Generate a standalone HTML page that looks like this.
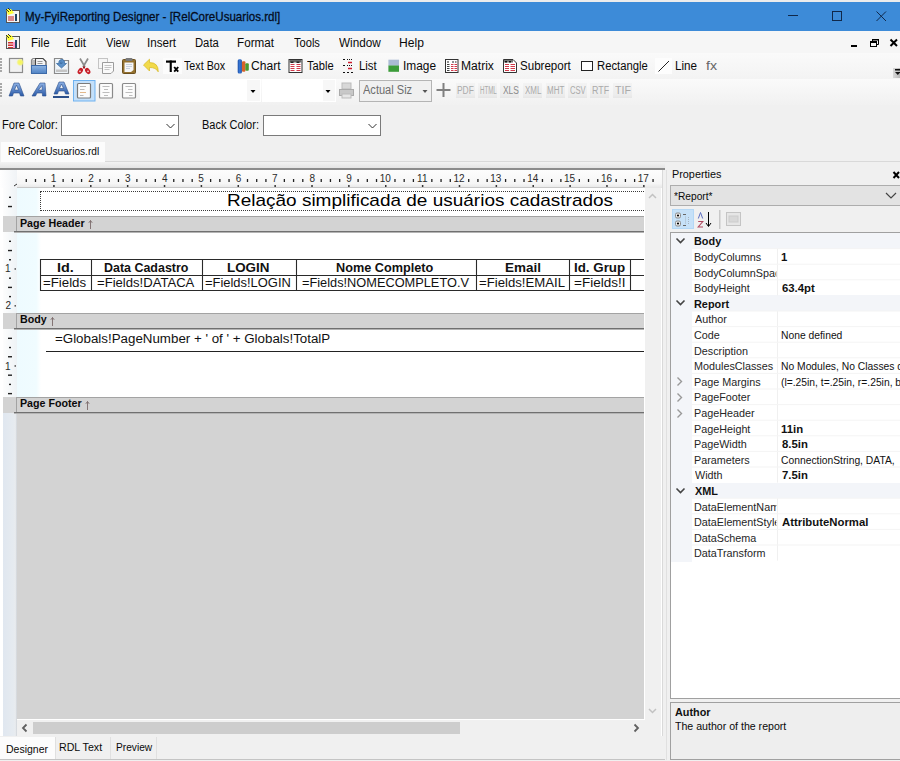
<!DOCTYPE html>
<html><head><meta charset="utf-8">
<style>
*{margin:0;padding:0;box-sizing:border-box}
html,body{width:900px;height:761px;overflow:hidden;background:#f0f0f0;font-family:"Liberation Sans",sans-serif;font-size:12px;color:#000;position:relative}
.a{position:absolute}
.t{position:absolute;white-space:nowrap;line-height:1;transform-origin:0 0}
</style></head><body>
<div class="a" style="left:0px;top:0px;width:900px;height:2px;background:#ececec;"></div>
<div class="a" style="left:0px;top:2px;width:900px;height:29px;background:#3d8bd8;"></div>
<svg class="a" style="left:780px;top:2px" width="120" height="29"><g stroke="#10284a" stroke-width="1" fill="none"><line x1="8" y1="13.5" x2="18" y2="13.5"/><rect x="52.5" y="9.5" width="9" height="9"/><path d="M96.5 9.5 L106 19 M106 9.5 L96.5 19"/></g></svg>
<svg class="a" style="left:5px;top:8px" width="16" height="16" viewBox="0 0 16 16"><rect x="1.5" y="2.5" width="13" height="12" fill="#f4f4f4" stroke="#555"/><rect x="3" y="8" width="6" height="5" fill="#d88"/><rect x="10" y="6" width="2" height="7" fill="#246"/><path d="M1 1 L6 1 L9 5 L3 7Z" fill="#ff3"/><path d="M1 1l3 3M3 0l3 3" stroke="#333"/></svg>
<div class="a" style="left:0px;top:31px;width:900px;height:22px;background:#f6f6f6;"></div>
<svg class="a" style="left:5px;top:34px" width="16" height="16" viewBox="0 0 16 16"><rect x="1.5" y="2.5" width="13" height="12" fill="#f4f4f4" stroke="#555"/><rect x="3" y="8" width="5" height="1.5" fill="#c33"/><rect x="3" y="10.5" width="5" height="1.5" fill="#c33"/><rect x="3" y="13" width="5" height="1" fill="#c33"/><rect x="10" y="6" width="2" height="8" fill="#246"/><rect x="8" y="8" width="2" height="6" fill="#f9c"/><path d="M1 1 L6 1 L9 5 L3 7Z" fill="#ff3"/><path d="M1 1l3 3M3 0l3 3" stroke="#333"/></svg>
<svg class="a" style="left:848px;top:36px" width="52" height="14"><rect x="3" y="9" width="6" height="2" fill="#000"/><g fill="none" stroke="#000"><rect x="22.5" y="5.5" width="6" height="5"/><path d="M24.5 5.5 V3.5 H30.5 V8.5 H28.5"/></g><rect x="22" y="5" width="7" height="2" fill="#000"/><rect x="24" y="3" width="7" height="1.5" fill="#000"/><path d="M42.5 3.5 L49 10 M49 3.5 L42.5 10" stroke="#000" stroke-width="2"/></svg>
<div class="a" style="left:0px;top:53px;width:900px;height:26px;background:linear-gradient(#fafafa,#f3f3f3);"></div>
<div class="a" style="left:0px;top:79px;width:900px;height:26px;background:linear-gradient(#fafafa,#f1f1f1);"></div>
<div class="a" style="left:893px;top:68px;width:7px;height:10px;background:linear-gradient(90deg,#d8d8d8,#b8b8b8);"></div>
<svg class="a" style="left:893px;top:68px" width="7" height="10"><rect x="2" y="1" width="5" height="1.5" fill="#111"/><path d="M2 4 H7.5 L4.8 7Z" fill="#111"/></svg>
<div class="a" style="left:0px;top:58px;width:2px;height:2px;background:#a8a8a8;"></div>
<div class="a" style="left:0px;top:61px;width:2px;height:2px;background:#a8a8a8;"></div>
<div class="a" style="left:0px;top:64px;width:2px;height:2px;background:#a8a8a8;"></div>
<div class="a" style="left:0px;top:67px;width:2px;height:2px;background:#a8a8a8;"></div>
<div class="a" style="left:0px;top:70px;width:2px;height:2px;background:#a8a8a8;"></div>
<div class="a" style="left:0px;top:83px;width:2px;height:2px;background:#a8a8a8;"></div>
<div class="a" style="left:0px;top:86px;width:2px;height:2px;background:#a8a8a8;"></div>
<div class="a" style="left:0px;top:89px;width:2px;height:2px;background:#a8a8a8;"></div>
<div class="a" style="left:0px;top:92px;width:2px;height:2px;background:#a8a8a8;"></div>
<div class="a" style="left:0px;top:95px;width:2px;height:2px;background:#a8a8a8;"></div>
<svg class="a" style="left:0;top:0" width="720" height="80">
<defs>
<linearGradient id="gsv" x1="0" y1="0" x2="0" y2="1"><stop offset="0" stop-color="#8db4e2"/><stop offset="1" stop-color="#4f82c4"/></linearGradient>
<linearGradient id="gbl" x1="0" y1="0" x2="1" y2="0"><stop offset="0" stop-color="#1b4fa8"/><stop offset=".5" stop-color="#3a7ad8"/><stop offset="1" stop-color="#1d4c9a"/></linearGradient>
<radialGradient id="gyl"><stop offset="0" stop-color="#f8f850"/><stop offset=".6" stop-color="#f4f470" stop-opacity=".9"/><stop offset="1" stop-color="#f4f4a0" stop-opacity="0"/></radialGradient>
</defs>
<!-- new -->
<rect x="9.5" y="58.5" width="13" height="14" fill="#f1f1f1" stroke="#8c8c8c" stroke-width="1.2"/>
<circle cx="20.2" cy="62.3" r="4" fill="url(#gyl)"/>
<!-- save -->
<path d="M31.5 73.5 V60 L33 58.5 H35" fill="none" stroke="#8a8a8a" stroke-width="1.2"/>
<rect x="32" y="60" width="3" height="6" fill="#bbb"/>
<path d="M35.5 65.5 V58.5 H43 L46 61.5 V65.5" fill="#f4f4f4" stroke="#444" stroke-width="1.1"/>
<rect x="37.5" y="61" width="5" height="1" fill="#999"/><rect x="37.5" y="63" width="5" height="1" fill="#999"/>
<rect x="31.5" y="65.5" width="15" height="8" fill="url(#gsv)" stroke="#3d6aa8"/>
<!-- import -->
<path d="M54.5 73.5 V58.5 H62 L63 60.5 H68.5 V73.5Z" fill="#eef4f9" stroke="#8a8a8a" stroke-width="1.2"/>
<rect x="56" y="69.5" width="11" height="2.5" fill="#c4c4c4"/>
<path d="M58.5 62.5 Q59.5 59 62.5 59.5 Q65 60 64.5 63.5 H66.5 L61.5 68 L56.5 63.5 H59.5 Q59.5 62 61.5 62 Q62.5 62.5 62 63.5 H60" fill="#5a90c8" stroke="#3d6ea4" stroke-width=".8"/>
<!-- cut -->
<path d="M80 58.5 L85 67 M88 58.5 L83 67" stroke="#8c8c8c" stroke-width="1.7" fill="none"/>
<ellipse cx="80.3" cy="71" rx="3.3" ry="2.3" transform="rotate(-55 80.3 71)" fill="#c81e28"/>
<ellipse cx="87.7" cy="71" rx="3.3" ry="2.3" transform="rotate(55 87.7 71)" fill="#c81e28"/>
<circle cx="80" cy="71.3" r="0.9" fill="#f4d0d0"/><circle cx="88" cy="71.3" r="0.9" fill="#f4d0d0"/>
<rect x="83" y="66.5" width="2" height="2" fill="#a01820"/>
<!-- copy -->
<rect x="98.5" y="58.5" width="9" height="10" fill="#f6f6f6" stroke="#c4c4c4"/>
<path d="M102.5 62.5 H113.5 V71 L111 73.5 H102.5Z" fill="#fafafa" stroke="#9c9c9c"/>
<path d="M104.5 65.5h7M104.5 67.5h7M104.5 69.5h5" stroke="#c4c4c4"/>
<!-- paste -->
<rect x="122.5" y="59.5" width="13" height="14" rx="1" fill="#94712e" stroke="#6a4f1e"/>
<path d="M124.5 62.5 H133.5 V70 L131 72 H124.5Z" fill="#f6f6f6"/>
<path d="M126 64.5h6M126 66.5h6M126 68.5h4" stroke="#c8d0dc"/>
<rect x="125.5" y="58" width="7" height="3" rx="1" fill="#7a7a7a"/>
<!-- undo -->
<path d="M143.5 65 L149.5 59.2 V62.6 Q158.5 62.5 158.2 71.8 Q156 67.4 149.5 67.5 V71Z" fill="#f2da4a" stroke="#d8bc2c" stroke-width=".8"/>
<!-- textbox -->
<rect x="163" y="58" width="19" height="16" fill="#fcfcfc"/>
<rect x="166" y="60.5" width="10" height="2.2" fill="#000"/>
<rect x="169.7" y="60.5" width="2.1" height="11.5" fill="#000"/>
<path d="M174.2 67 L178.2 71.7 M178.2 67 L174.2 71.7" stroke="#000" stroke-width="1.9"/>
<!-- chart -->
<rect x="237.7" y="59.2" width="4.2" height="14.4" rx="1.5" fill="url(#gbl)"/>
<rect x="242" y="61.3" width="3.4" height="10.4" rx="1" fill="#d8632a"/>
<rect x="245.3" y="63.2" width="3.5" height="7.5" rx="1" fill="#4a9a2e"/>
<!-- table -->
<rect x="289" y="59.5" width="13" height="13" fill="#fff" stroke="#333"/>
<rect x="289.5" y="60" width="12" height="2.5" fill="#6a6a6a"/>
<rect x="290.5" y="61.5" width="3" height="1.5" fill="#222"/><rect x="296.5" y="61.5" width="3" height="1.5" fill="#222"/>
<path d="M290.5 64.5h4M296.5 64.5h4M290.5 66.5h4M296.5 66.5h4M290.5 68.5h4M296.5 68.5h4M290.5 70.5h4M296.5 70.5h4" stroke="#d23a4a" stroke-width="1.1"/>
<!-- list -->
<path d="M343 59.5h2M343 65.5h2M343 72.5h2M347 72.5h2M351 72.5h2" stroke="#111" stroke-width="1.2"/>
<path d="M347 59.5h6M347 65.5h6" stroke="#111" stroke-width="1" stroke-dasharray="1 1"/>
<path d="M348 62.5h4M348 68.5h4" stroke="#d01c2c" stroke-width="1.6"/>
<!-- image -->
<rect x="388.4" y="59.7" width="10.6" height="6" fill="#aabbd4"/>
<rect x="388.4" y="65.5" width="10.6" height="6.3" fill="#3c9c3a"/>
<!-- matrix -->
<rect x="445.5" y="59.5" width="12.5" height="13" fill="#fff" stroke="#333"/>
<path d="M447 62h2M452 62h2M455 62h1.5" stroke="#222" stroke-width="1.2"/>
<path d="M447 64.5h2.5M447 66.5h2.5M447 68.5h2.5M447 70.5h2.5" stroke="#444" stroke-width="1.1"/>
<path d="M451 64.5h2.5M454.5 64.5h2.5M451 66.5h2.5M454.5 66.5h2.5M451 68.5h2.5M454.5 68.5h2.5M451 70.5h2.5M454.5 70.5h2.5" stroke="#d23a4a" stroke-width="1.1"/>
<!-- subreport -->
<path d="M503.5 59.5 H513 L516.5 63 V72.5 H503.5Z" fill="#fff" stroke="#333"/>
<rect x="504" y="60" width="9" height="2.5" fill="#777"/>
<rect x="505" y="61" width="2" height="1.5" fill="#111"/><rect x="509" y="61" width="2" height="1.5" fill="#111"/>
<path d="M505 64.5h4M510.5 64.5h4.5M505 66.5h4M510.5 66.5h4.5M505 68.5h4M510.5 68.5h4.5M505 70.5h4M510.5 70.5h4.5" stroke="#d23a4a" stroke-width="1.1"/>
<!-- rectangle -->
<rect x="581.5" y="61.5" width="11" height="9" fill="#fff" stroke="#222"/>
<!-- line -->
<rect x="655" y="58" width="17" height="16" fill="#fdfdfd"/>
<path d="M658.5 71.5 L669 61" stroke="#222" stroke-width="1"/>
</svg>
<svg class="a" style="left:0;top:79px" width="640" height="26">
<defs><linearGradient id="ga" x1="0" y1="0" x2="0" y2="1"><stop offset="0" stop-color="#8fb3e6"/><stop offset="1" stop-color="#2a5aa8"/></linearGradient></defs>
<path d="M9 17 L14 4 H19 L24 17 H20.5 L19.5 14 H13.5 L12.5 17Z M14.5 11 H18.5 L16.5 6Z" fill="url(#ga)" fill-rule="evenodd" stroke="#2b4f8a" stroke-width=".6"/>
<path d="M32 17 L40 4 H45 L46 17 H42.5 L42.3 14 H37 L35.5 17Z M38.5 11 H42.2 L42 6.5Z" fill="url(#ga)" fill-rule="evenodd" stroke="#2b4f8a" stroke-width=".6"/>
<path d="M54 15 L59 3 H64 L69 15 H65.5 L64.5 12 H58.5 L57.5 15Z M59.5 9.5 H63.5 L61.5 5Z" fill="url(#ga)" fill-rule="evenodd" stroke="#2b4f8a" stroke-width=".6"/>
<rect x="53" y="17" width="16" height="2" fill="#2b4f8a"/>
<rect x="73.5" y="1.5" width="21.5" height="20.5" fill="#c4e0fa" stroke="#6fb2f0"/>
<rect x="77.5" y="4.5" width="13" height="14.5" rx="1" fill="#fcfcfc" stroke="#7a7a7a" stroke-width="1.2"/>
<path d="M80 7.5h6M80 10.5h4.5M80 13.5h6M80 16.5h3.5" stroke="#b8b8b8"/><path d="M80 13.5h6" stroke="#e3b88a"/>
<rect x="99.5" y="4.5" width="13" height="14.5" rx="1" fill="#fcfcfc" stroke="#8a8a8a" stroke-width="1.2"/>
<path d="M102.5 7.5h7M104 10.5h4M102.5 13.5h7M104 16.5h4" stroke="#bdbdbd"/>
<rect x="122.5" y="4.5" width="13" height="14.5" rx="1" fill="#fcfcfc" stroke="#8a8a8a" stroke-width="1.2"/>
<path d="M125.5 7.5h7M128 10.5h4.5M125.5 13.5h7M129 16.5h3.5" stroke="#bdbdbd"/>
<rect x="140" y="0" width="121" height="23" fill="#fff"/>
<rect x="247" y="1" width="13" height="21" fill="#f7f7f7"/>
<path d="M250.5 11 H255.5 L253 14Z" fill="#000"/>
<rect x="262" y="0" width="74" height="23" fill="#fff"/>
<rect x="323" y="1" width="12" height="21" fill="#f7f7f7"/>
<path d="M325.5 11 H330.5 L328 14Z" fill="#000"/>
<g transform="translate(339,4)"><rect x="3" y="0" width="9" height="6" fill="#d8d8d8" stroke="#bbb"/><rect x="0.5" y="6.5" width="14" height="6" fill="#c8c8c8" stroke="#aaa"/><rect x="3" y="11" width="9" height="4" fill="#e6e6e6" stroke="#bbb"/></g>
<rect x="359.5" y="1.5" width="72" height="21" fill="#f0f0f0" stroke="#b4b4b4"/>
<path d="M422.5 11 H427.5 L425 14Z" fill="#555"/>
<path d="M443.5 4 V18 M436.5 11 H450.5" stroke="#808080" stroke-width="2"/>
</svg>
<div class="a" style="left:456px;top:83px;width:19px;height:15px;background:linear-gradient(#f3f3f3,#ececec 80%,#e6e6e6);"></div>
<div class="a" style="left:478px;top:83px;width:19px;height:15px;background:linear-gradient(#f3f3f3,#ececec 80%,#e6e6e6);"></div>
<div class="a" style="left:500px;top:83px;width:19px;height:15px;background:linear-gradient(#f3f3f3,#ececec 80%,#e6e6e6);"></div>
<div class="a" style="left:523px;top:83px;width:19px;height:15px;background:linear-gradient(#f3f3f3,#ececec 80%,#e6e6e6);"></div>
<div class="a" style="left:546px;top:83px;width:19px;height:15px;background:linear-gradient(#f3f3f3,#ececec 80%,#e6e6e6);"></div>
<div class="a" style="left:568px;top:83px;width:19px;height:15px;background:linear-gradient(#f3f3f3,#ececec 80%,#e6e6e6);"></div>
<div class="a" style="left:590px;top:83px;width:19px;height:15px;background:linear-gradient(#f3f3f3,#ececec 80%,#e6e6e6);"></div>
<div class="a" style="left:613px;top:83px;width:19px;height:15px;background:linear-gradient(#f3f3f3,#ececec 80%,#e6e6e6);"></div>
<div class="a" style="left:61px;top:115px;width:118px;height:21px;background:#fff;border:1px solid #7a7a7a"></div>
<div class="a" style="left:263px;top:115px;width:118px;height:21px;background:#fff;border:1px solid #7a7a7a"></div>
<svg class="a" style="left:0;top:115px" width="400" height="21"><path d="M166.5 9 L170.5 13 L174.5 9 M368.5 9 L372.5 13 L376.5 9" stroke="#333" fill="none"/></svg>
<div class="a" style="left:1px;top:142px;width:104px;height:20px;background:#fcfcfc;"></div>
<div class="a" style="left:105px;top:161px;width:795px;height:1px;background:#d9d9d9;"></div>
<div class="a" style="left:0px;top:162px;width:665px;height:6px;background:linear-gradient(#f3f3f3,#e4e4e4);"></div>
<div class="a" style="left:0px;top:168px;width:665px;height:2px;background:#8c8c8c;"></div>
<div class="a" style="left:0px;top:170px;width:662px;height:567px;background:#fff;"></div>
<div class="a" style="left:17px;top:170px;width:645px;height:18px;background:linear-gradient(#fdfdfd,#f6f6f6 75%,#e6e6e6);"></div>
<div class="a" style="left:17px;top:187px;width:628px;height:1px;background:#c8c8c8;"></div>
<div class="a" style="left:0px;top:170px;width:17px;height:18px;background:linear-gradient(90deg,#fff,#f0f3f6);"></div>
<svg class="a" style="left:0;top:170px" width="662" height="18"><rect x="25.62" y="9" width="1.3" height="3" fill="#222"/><rect x="34.84" y="9" width="1.3" height="3" fill="#222"/><rect x="44.05" y="9" width="1.3" height="3" fill="#222"/><rect x="62.49" y="9" width="1.3" height="3" fill="#222"/><rect x="71.70" y="9" width="1.3" height="3" fill="#222"/><rect x="80.92" y="9" width="1.3" height="3" fill="#222"/><rect x="53.17" y="15" width="1.5" height="2" fill="#333"/><rect x="99.36" y="9" width="1.3" height="3" fill="#222"/><rect x="108.58" y="9" width="1.3" height="3" fill="#222"/><rect x="117.79" y="9" width="1.3" height="3" fill="#222"/><rect x="90.04" y="15" width="1.5" height="2" fill="#333"/><rect x="136.23" y="9" width="1.3" height="3" fill="#222"/><rect x="145.44" y="9" width="1.3" height="3" fill="#222"/><rect x="154.66" y="9" width="1.3" height="3" fill="#222"/><rect x="126.91" y="15" width="1.5" height="2" fill="#333"/><rect x="173.10" y="9" width="1.3" height="3" fill="#222"/><rect x="182.31" y="9" width="1.3" height="3" fill="#222"/><rect x="191.53" y="9" width="1.3" height="3" fill="#222"/><rect x="163.78" y="15" width="1.5" height="2" fill="#333"/><rect x="209.97" y="9" width="1.3" height="3" fill="#222"/><rect x="219.19" y="9" width="1.3" height="3" fill="#222"/><rect x="228.40" y="9" width="1.3" height="3" fill="#222"/><rect x="200.65" y="15" width="1.5" height="2" fill="#333"/><rect x="246.84" y="9" width="1.3" height="3" fill="#222"/><rect x="256.05" y="9" width="1.3" height="3" fill="#222"/><rect x="265.27" y="9" width="1.3" height="3" fill="#222"/><rect x="237.52" y="15" width="1.5" height="2" fill="#333"/><rect x="283.71" y="9" width="1.3" height="3" fill="#222"/><rect x="292.92" y="9" width="1.3" height="3" fill="#222"/><rect x="302.14" y="9" width="1.3" height="3" fill="#222"/><rect x="274.39" y="15" width="1.5" height="2" fill="#333"/><rect x="320.58" y="9" width="1.3" height="3" fill="#222"/><rect x="329.79" y="9" width="1.3" height="3" fill="#222"/><rect x="339.01" y="9" width="1.3" height="3" fill="#222"/><rect x="311.26" y="15" width="1.5" height="2" fill="#333"/><rect x="357.45" y="9" width="1.3" height="3" fill="#222"/><rect x="366.66" y="9" width="1.3" height="3" fill="#222"/><rect x="375.88" y="9" width="1.3" height="3" fill="#222"/><rect x="348.13" y="15" width="1.5" height="2" fill="#333"/><rect x="394.32" y="9" width="1.3" height="3" fill="#222"/><rect x="403.53" y="9" width="1.3" height="3" fill="#222"/><rect x="412.75" y="9" width="1.3" height="3" fill="#222"/><rect x="385.00" y="15" width="1.5" height="2" fill="#333"/><rect x="431.19" y="9" width="1.3" height="3" fill="#222"/><rect x="440.40" y="9" width="1.3" height="3" fill="#222"/><rect x="449.62" y="9" width="1.3" height="3" fill="#222"/><rect x="421.87" y="15" width="1.5" height="2" fill="#333"/><rect x="468.06" y="9" width="1.3" height="3" fill="#222"/><rect x="477.27" y="9" width="1.3" height="3" fill="#222"/><rect x="486.49" y="9" width="1.3" height="3" fill="#222"/><rect x="458.74" y="15" width="1.5" height="2" fill="#333"/><rect x="504.93" y="9" width="1.3" height="3" fill="#222"/><rect x="514.14" y="9" width="1.3" height="3" fill="#222"/><rect x="523.36" y="9" width="1.3" height="3" fill="#222"/><rect x="495.61" y="15" width="1.5" height="2" fill="#333"/><rect x="541.80" y="9" width="1.3" height="3" fill="#222"/><rect x="551.01" y="9" width="1.3" height="3" fill="#222"/><rect x="560.23" y="9" width="1.3" height="3" fill="#222"/><rect x="532.48" y="15" width="1.5" height="2" fill="#333"/><rect x="578.67" y="9" width="1.3" height="3" fill="#222"/><rect x="587.88" y="9" width="1.3" height="3" fill="#222"/><rect x="597.10" y="9" width="1.3" height="3" fill="#222"/><rect x="569.35" y="15" width="1.5" height="2" fill="#333"/><rect x="615.54" y="9" width="1.3" height="3" fill="#222"/><rect x="624.75" y="9" width="1.3" height="3" fill="#222"/><rect x="633.97" y="9" width="1.3" height="3" fill="#222"/><rect x="606.22" y="15" width="1.5" height="2" fill="#333"/><rect x="652.41" y="9" width="1.3" height="3" fill="#222"/><rect x="643.09" y="15" width="1.5" height="2" fill="#333"/><path d="M14 16 L17 14" stroke="#333"/></svg>
<div class="a" style="left:3px;top:188px;width:14px;height:549px;background:linear-gradient(90deg,#e0e7f0,#e6ebf0 75%,#e9ecef 88%,#cfd3d8);"></div>
<div class="a" style="left:0px;top:188px;width:3px;height:549px;background:#fff;"></div>
<div class="a" style="left:17px;top:188px;width:628px;height:532px;background:#d3d3d3;"></div>
<div class="a" style="left:17px;top:188px;width:628px;height:28px;background:#fff;"></div>
<div class="a" style="left:17px;top:232px;width:628px;height:81px;background:#fff;"></div>
<div class="a" style="left:17px;top:329px;width:628px;height:68px;background:#fff;"></div>
<div class="a" style="left:17px;top:188px;width:24px;height:28px;background:linear-gradient(90deg,#eefbff,#f0fcff 80%,#fff);"></div>
<div class="a" style="left:17px;top:232px;width:24px;height:81px;background:linear-gradient(90deg,#eefbff,#f0fcff 80%,#fff);"></div>
<div class="a" style="left:17px;top:329px;width:24px;height:68px;background:linear-gradient(90deg,#eefbff,#f0fcff 80%,#fff);"></div>
<div class="a" style="left:3px;top:188px;width:14px;height:28px;background:linear-gradient(90deg,#fdfdfd,#eef3f6);"></div>
<div class="a" style="left:3px;top:232px;width:14px;height:81px;background:linear-gradient(90deg,#fdfdfd,#eef3f6);"></div>
<div class="a" style="left:3px;top:329px;width:14px;height:68px;background:linear-gradient(90deg,#fdfdfd,#eef3f6);"></div>
<div class="a" style="left:3px;top:216px;width:642px;height:16px;background:#d3d3d3;"></div>
<div class="a" style="left:16px;top:216px;width:629px;height:1px;background:#a3a3a3;"></div>
<div class="a" style="left:16px;top:216px;width:1px;height:15px;background:#a3a3a3;"></div>
<div class="a" style="left:14px;top:231px;width:630px;height:1px;background:#707070;"></div>
<div class="a" style="left:14px;top:232px;width:630px;height:1px;background:#b4b4b4;"></div>
<div class="a" style="left:3px;top:313px;width:642px;height:16px;background:#d3d3d3;"></div>
<div class="a" style="left:16px;top:313px;width:629px;height:1px;background:#a3a3a3;"></div>
<div class="a" style="left:16px;top:313px;width:1px;height:15px;background:#a3a3a3;"></div>
<div class="a" style="left:14px;top:328px;width:630px;height:1px;background:#707070;"></div>
<div class="a" style="left:14px;top:329px;width:630px;height:1px;background:#b4b4b4;"></div>
<div class="a" style="left:3px;top:397px;width:642px;height:16px;background:#d3d3d3;"></div>
<div class="a" style="left:16px;top:397px;width:629px;height:1px;background:#a3a3a3;"></div>
<div class="a" style="left:16px;top:397px;width:1px;height:15px;background:#a3a3a3;"></div>
<div class="a" style="left:14px;top:412px;width:630px;height:1px;background:#707070;"></div>
<div class="a" style="left:14px;top:413px;width:630px;height:1px;background:#b4b4b4;"></div>
<svg class="a" style="left:0;top:0" width="17" height="761"><rect x="9" y="196.62" width="2" height="1.4" fill="#222"/><rect x="8" y="205.84" width="4" height="1.4" fill="#222"/><rect x="9" y="240.62" width="2" height="1.4" fill="#222"/><rect x="8" y="249.84" width="4" height="1.4" fill="#222"/><rect x="9" y="259.05" width="2" height="1.4" fill="#222"/><rect x="14.5" y="268.27" width="1.5" height="1.4" fill="#444"/><rect x="9" y="277.49" width="2" height="1.4" fill="#222"/><rect x="8" y="286.70" width="4" height="1.4" fill="#222"/><rect x="9" y="295.92" width="2" height="1.4" fill="#222"/><rect x="14.5" y="305.14" width="1.5" height="1.4" fill="#444"/><rect x="8" y="337.62" width="4" height="1.4" fill="#222"/><rect x="9" y="346.83" width="2" height="1.4" fill="#222"/><rect x="8" y="356.05" width="4" height="1.4" fill="#222"/><rect x="14.5" y="365.27" width="1.5" height="1.4" fill="#444"/><rect x="8" y="374.49" width="4" height="1.4" fill="#222"/><rect x="9" y="383.70" width="2" height="1.4" fill="#222"/><rect x="8" y="392.92" width="4" height="1.4" fill="#222"/></svg>
<div class="a" style="left:40px;top:191px;width:604px;height:20px;border-top:1px dotted #3a3a3a;border-bottom:1px dotted #3a3a3a;border-left:1px dotted #3a3a3a"></div>
<svg class="a" style="left:0;top:0" width="645" height="761"><g stroke="#2a2a2a" stroke-width="1.1" fill="none"><path d="M40 259.5 H644 M40 275.5 H644 M40 290.5 H644 M40.5 259 V291 M91.5 259 V291 M202.5 259 V291 M296.5 259 V291 M476.5 259 V291 M569.5 259 V291 M630.5 259 V291"/></g><path d="M46 351.5 H644" stroke="#222" stroke-width="1.1"/></svg>
<svg class="a" style="left:87.00px;top:219px" width="6" height="11"><path d="M3.5 1.5 V10 M1.8 3.8 L3.5 1.5 L5.2 3.8" stroke="#7a6a6a" fill="none" stroke-width=".9"/></svg>
<svg class="a" style="left:49.18px;top:316px" width="6" height="11"><path d="M3.5 1.5 V10 M1.8 3.8 L3.5 1.5 L5.2 3.8" stroke="#7a6a6a" fill="none" stroke-width=".9"/></svg>
<svg class="a" style="left:84.09px;top:400px" width="6" height="11"><path d="M3.5 1.5 V10 M1.8 3.8 L3.5 1.5 L5.2 3.8" stroke="#7a6a6a" fill="none" stroke-width=".9"/></svg>
<div class="a" style="left:645px;top:188px;width:16px;height:532px;background:#f0f0f0;"></div>
<div class="a" style="left:17px;top:720px;width:628px;height:16px;background:#f0f0f0;"></div>
<div class="a" style="left:33px;top:722px;width:427px;height:12px;background:#cdcdcd;"></div>
<svg class="a" style="left:0;top:0" width="662" height="740"><g stroke="#c2c2c2" stroke-width="1.5" fill="none"><path d="M649 198 L652.5 194.5 L656 198"/><path d="M649 709 L652.5 712.5 L656 709"/></g><g stroke="#606060" stroke-width="1.8" fill="none"><path d="M26.5 724.5 L23 728 L26.5 731.5"/><path d="M634.5 724.5 L638 728 L634.5 731.5"/></g></svg>
<div class="a" style="left:645px;top:720px;width:16px;height:16px;background:#f0f0f0;"></div>
<div class="a" style="left:17px;top:719px;width:628px;height:1px;background:#fff;"></div>
<div class="a" style="left:644px;top:188px;width:1px;height:532px;background:#fff;"></div>
<div class="a" style="left:662px;top:170px;width:1px;height:567px;background:#d9d9d9;"></div>
<div class="a" style="left:0px;top:736px;width:663px;height:1px;background:#d9d9d9;"></div>
<div class="a" style="left:0px;top:736px;width:665px;height:25px;background:#f0f0f0;"></div>
<div class="a" style="left:0px;top:737px;width:55px;height:22px;background:#fcfcfc;"></div>
<div class="a" style="left:55px;top:737px;width:1px;height:22px;background:#e0e0e0;"></div>
<div class="a" style="left:110px;top:737px;width:1px;height:22px;background:#e0e0e0;"></div>
<div class="a" style="left:156px;top:737px;width:1px;height:22px;background:#e0e0e0;"></div>
<div class="a" style="left:0px;top:759px;width:666px;height:1px;background:#c4c4c4;"></div>
<div class="a" style="left:665px;top:162px;width:235px;height:599px;background:#f0f0f0;"></div>
<div class="a" style="left:666px;top:170px;width:1px;height:590px;background:#e0e0e0;"></div>
<svg class="a" style="left:890px;top:170px" width="10" height="10"><path d="M3.5 2 L9 8 M9 2 L3.5 8" stroke="#000" stroke-width="2"/></svg>
<div class="a" style="left:670px;top:185px;width:230px;height:21px;background:#e3e3e3;border:1px solid #adadad;border-right:none"></div>
<svg class="a" style="left:880px;top:185px" width="20" height="21"><path d="M6 8 L11 13 L16 8" stroke="#444" fill="none" stroke-width="1.2"/></svg>
<svg class="a" style="left:670px;top:207px" width="80" height="25">
<rect x="2.5" y="2.5" width="21" height="19" fill="#c6e1f8" stroke="#b4d8f6"/>
<rect x="5.5" y="6" width="5" height="5" rx="1.5" fill="#eee" stroke="#8a8a8a"/><circle cx="8" cy="8.5" r="1.1" fill="#000"/>
<rect x="5.5" y="14" width="5" height="5" rx="1.5" fill="#eee" stroke="#8a8a8a"/><circle cx="8" cy="16.5" r="1.1" fill="#000"/>
<path d="M13 7.5h3M13 18.5h3" stroke="#666"/><path d="M15.5 9.5v7M18.5 10v8" stroke="#a8b4c0" stroke-dasharray="1 1"/>
<path d="M28.3 11.5 L30.5 5.5 L32.7 11.5" stroke="#5a6cc0" stroke-width="1" fill="none"/>
<path d="M28.2 14.5 H32.8 L28.2 20 H33" stroke="#b04860" stroke-width="1.1" fill="none"/>
<path d="M38.5 5 V19 M36 16 L38.5 19.5 L41 16" stroke="#000" fill="none"/>
<rect x="49" y="3" width="1.5" height="19" fill="#c8c8c8"/>
<rect x="56.5" y="5.5" width="14" height="13" fill="#e6e6e6" stroke="#c4c4c4"/><rect x="59" y="9" width="9" height="6" fill="#d8d8d8" stroke="#ccc"/>
</svg>
<div class="a" style="left:670px;top:232px;width:230px;height:467px;background:#fff;border:1px solid #a0a0a0;border-right:none"></div>
<div class="a" style="left:671px;top:233px;width:21px;height:328.5px;background:#f3f5f9;"></div>
<div class="a" style="left:671px;top:233.0px;width:229px;height:15.6px;background:#f3f5f9;"></div>
<svg class="a" style="left:675px;top:236.00px" width="12" height="10"><path d="M1.5 2.5 L5.5 6.5 L9.5 2.5" stroke="#444" stroke-width="1.6" fill="none"/></svg>
<div class="a" style="left:671px;top:295.4px;width:229px;height:15.6px;background:#f3f5f9;"></div>
<svg class="a" style="left:675px;top:298.40px" width="12" height="10"><path d="M1.5 2.5 L5.5 6.5 L9.5 2.5" stroke="#444" stroke-width="1.6" fill="none"/></svg>
<div class="a" style="left:671px;top:482.6px;width:229px;height:15.6px;background:#f3f5f9;"></div>
<svg class="a" style="left:675px;top:485.60px" width="12" height="10"><path d="M1.5 2.5 L5.5 6.5 L9.5 2.5" stroke="#444" stroke-width="1.6" fill="none"/></svg>
<svg class="a" style="left:674px;top:376.40px" width="10" height="11"><path d="M3.5 1.5 L7.5 5.5 L3.5 9.5" stroke="#999" stroke-width="1.4" fill="none"/></svg>
<svg class="a" style="left:674px;top:392.00px" width="10" height="11"><path d="M3.5 1.5 L7.5 5.5 L3.5 9.5" stroke="#999" stroke-width="1.4" fill="none"/></svg>
<svg class="a" style="left:674px;top:407.60px" width="10" height="11"><path d="M3.5 1.5 L7.5 5.5 L3.5 9.5" stroke="#999" stroke-width="1.4" fill="none"/></svg>
<svg class="a" style="left:0;top:0" width="900" height="761"><rect x="777" y="248.60" width="1" height="15.60" fill="#f0f0f0"/><rect x="692" y="248.10" width="208" height="1" fill="#f4f4f4"/><rect x="777" y="264.20" width="1" height="15.60" fill="#f0f0f0"/><rect x="692" y="263.70" width="208" height="1" fill="#f4f4f4"/><rect x="777" y="279.80" width="1" height="15.60" fill="#f0f0f0"/><rect x="692" y="279.30" width="208" height="1" fill="#f4f4f4"/><rect x="777" y="311.00" width="1" height="15.60" fill="#f0f0f0"/><rect x="692" y="310.50" width="208" height="1" fill="#f4f4f4"/><rect x="777" y="326.60" width="1" height="15.60" fill="#f0f0f0"/><rect x="692" y="326.10" width="208" height="1" fill="#f4f4f4"/><rect x="777" y="342.20" width="1" height="15.60" fill="#f0f0f0"/><rect x="692" y="341.70" width="208" height="1" fill="#f4f4f4"/><rect x="777" y="357.80" width="1" height="15.60" fill="#f0f0f0"/><rect x="692" y="357.30" width="208" height="1" fill="#f4f4f4"/><rect x="777" y="373.40" width="1" height="15.60" fill="#f0f0f0"/><rect x="692" y="372.90" width="208" height="1" fill="#f4f4f4"/><rect x="777" y="389.00" width="1" height="15.60" fill="#f0f0f0"/><rect x="692" y="388.50" width="208" height="1" fill="#f4f4f4"/><rect x="777" y="404.60" width="1" height="15.60" fill="#f0f0f0"/><rect x="692" y="404.10" width="208" height="1" fill="#f4f4f4"/><rect x="777" y="420.20" width="1" height="15.60" fill="#f0f0f0"/><rect x="692" y="419.70" width="208" height="1" fill="#f4f4f4"/><rect x="777" y="435.80" width="1" height="15.60" fill="#f0f0f0"/><rect x="692" y="435.30" width="208" height="1" fill="#f4f4f4"/><rect x="777" y="451.40" width="1" height="15.60" fill="#f0f0f0"/><rect x="692" y="450.90" width="208" height="1" fill="#f4f4f4"/><rect x="777" y="467.00" width="1" height="15.60" fill="#f0f0f0"/><rect x="692" y="466.50" width="208" height="1" fill="#f4f4f4"/><rect x="777" y="498.20" width="1" height="15.60" fill="#f0f0f0"/><rect x="692" y="497.70" width="208" height="1" fill="#f4f4f4"/><rect x="777" y="513.80" width="1" height="15.60" fill="#f0f0f0"/><rect x="692" y="513.30" width="208" height="1" fill="#f4f4f4"/><rect x="777" y="529.40" width="1" height="15.60" fill="#f0f0f0"/><rect x="692" y="528.90" width="208" height="1" fill="#f4f4f4"/><rect x="777" y="545.00" width="1" height="15.60" fill="#f0f0f0"/><rect x="692" y="544.50" width="208" height="1" fill="#f4f4f4"/></svg>
<div class="a" style="left:670px;top:702px;width:230px;height:58px;background:#eeeeee;border:1px solid #a0a0a0;border-right:none"></div>
<div class="t" style="left:24.51px;top:10px;font-size:13px;font-weight:normal;color:#040c1c;transform:scaleX(0.8898);-webkit-text-stroke:0.3px #040c1c;">My-FyiReporting Designer - [RelCoreUsuarios.rdl]</div>
<div class="t" style="left:30.54px;top:37px;font-size:12px;font-weight:normal;color:#0a0a0a;transform:scaleX(0.9611);">File</div>
<div class="t" style="left:66.23px;top:37px;font-size:12px;font-weight:normal;color:#0a0a0a;transform:scaleX(0.9650);">Edit</div>
<div class="t" style="left:105.60px;top:37px;font-size:12px;font-weight:normal;color:#0a0a0a;transform:scaleX(0.9192);">View</div>
<div class="t" style="left:147.43px;top:37px;font-size:12px;font-weight:normal;color:#0a0a0a;transform:scaleX(0.9690);">Insert</div>
<div class="t" style="left:194.56px;top:37px;font-size:12px;font-weight:normal;color:#0a0a0a;transform:scaleX(0.9375);">Data</div>
<div class="t" style="left:236.73px;top:37px;font-size:12px;font-weight:normal;color:#0a0a0a;transform:scaleX(0.9730);">Format</div>
<div class="t" style="left:293.70px;top:37px;font-size:12px;font-weight:normal;color:#0a0a0a;transform:scaleX(0.9250);">Tools</div>
<div class="t" style="left:338.80px;top:37px;font-size:12px;font-weight:normal;color:#0a0a0a;transform:scaleX(0.9791);">Window</div>
<div class="t" style="left:399.39px;top:37px;font-size:12px;font-weight:normal;color:#0a0a0a;transform:scaleX(1.0087);">Help</div>
<div class="t" style="left:184.40px;top:60px;font-size:12px;font-weight:normal;color:#0a0a0a;transform:scaleX(0.8935);">Text Box</div>
<div class="t" style="left:250.69px;top:60px;font-size:12px;font-weight:normal;color:#0a0a0a;transform:scaleX(1.0071);">Chart</div>
<div class="t" style="left:307.30px;top:60px;font-size:12px;font-weight:normal;color:#0a0a0a;transform:scaleX(0.9286);">Table</div>
<div class="t" style="left:359.25px;top:60px;font-size:12px;font-weight:normal;color:#0a0a0a;transform:scaleX(0.9500);">List</div>
<div class="t" style="left:403.31px;top:60px;font-size:12px;font-weight:normal;color:#0a0a0a;transform:scaleX(0.9906);">Image</div>
<div class="t" style="left:461.39px;top:60px;font-size:12px;font-weight:normal;color:#0a0a0a;transform:scaleX(1.0063);">Matrix</div>
<div class="t" style="left:519.94px;top:60px;font-size:12px;font-weight:normal;color:#0a0a0a;transform:scaleX(0.9635);">Subreport</div>
<div class="t" style="left:597.26px;top:60px;font-size:12px;font-weight:normal;color:#0a0a0a;transform:scaleX(0.9396);">Rectangle</div>
<div class="t" style="left:674.63px;top:60px;font-size:12px;font-weight:normal;color:#0a0a0a;transform:scaleX(0.9714);">Line</div>
<div class="t" style="left:705.80px;top:60px;font-size:12px;font-weight:normal;color:#666;transform:scaleX(1.1778);">fx</div>
<div class="t" style="left:362.50px;top:84px;font-size:12px;font-weight:normal;color:#6d6d6d;transform:scaleX(0.9208);">Actual Siz</div>
<div class="t" style="left:456.96px;top:86px;font-size:10px;font-weight:normal;color:#aaaaaa;transform:scaleX(0.8421);">PDF</div>
<div class="t" style="left:479.68px;top:86px;font-size:10px;font-weight:normal;color:#aaaaaa;transform:scaleX(0.6154);">HTML</div>
<div class="t" style="left:502.80px;top:86px;font-size:10px;font-weight:normal;color:#8a8a8a;transform:scaleX(0.8421);">XLS</div>
<div class="t" style="left:525.30px;top:86px;font-size:10px;font-weight:normal;color:#aaaaaa;transform:scaleX(0.8000);">XML</div>
<div class="t" style="left:547.00px;top:86px;font-size:10px;font-weight:normal;color:#aaaaaa;transform:scaleX(0.8000);">MHT</div>
<div class="t" style="left:570.30px;top:86px;font-size:10px;font-weight:normal;color:#aaaaaa;transform:scaleX(0.7619);">CSV</div>
<div class="t" style="left:591.91px;top:86px;font-size:10px;font-weight:normal;color:#aaaaaa;transform:scaleX(0.8889);">RTF</div>
<div class="t" style="left:615.30px;top:86px;font-size:10px;font-weight:normal;color:#aaaaaa;transform:scaleX(1.0667);">TIF</div>
<div class="t" style="left:2.37px;top:119px;font-size:12px;font-weight:normal;color:#0a0a0a;transform:scaleX(0.9310);">Fore Color:</div>
<div class="t" style="left:202.38px;top:119px;font-size:12px;font-weight:normal;color:#0a0a0a;transform:scaleX(0.9183);">Back Color:</div>
<div class="t" style="left:7.78px;top:146px;font-size:11px;font-weight:normal;color:#0a0a0a;transform:scaleX(0.9206);">RelCoreUsuarios.rdl</div>
<div class="t" style="left:50.87px;top:174px;font-size:10px;font-weight:normal;color:#2a2a2a;transform:scaleX(1.0000);">1</div>
<div class="t" style="left:88.24px;top:174px;font-size:10px;font-weight:normal;color:#2a2a2a;transform:scaleX(1.0000);">2</div>
<div class="t" style="left:125.11px;top:174px;font-size:10px;font-weight:normal;color:#2a2a2a;transform:scaleX(1.0000);">3</div>
<div class="t" style="left:161.98px;top:174px;font-size:10px;font-weight:normal;color:#2a2a2a;transform:scaleX(1.0000);">4</div>
<div class="t" style="left:198.35px;top:174px;font-size:10px;font-weight:normal;color:#2a2a2a;transform:scaleX(1.0000);">5</div>
<div class="t" style="left:235.72px;top:174px;font-size:10px;font-weight:normal;color:#2a2a2a;transform:scaleX(1.0000);">6</div>
<div class="t" style="left:272.09px;top:174px;font-size:10px;font-weight:normal;color:#2a2a2a;transform:scaleX(1.0000);">7</div>
<div class="t" style="left:309.46px;top:174px;font-size:10px;font-weight:normal;color:#2a2a2a;transform:scaleX(1.0000);">8</div>
<div class="t" style="left:346.33px;top:174px;font-size:10px;font-weight:normal;color:#2a2a2a;transform:scaleX(1.0000);">9</div>
<div class="t" style="left:379.70px;top:174px;font-size:10px;font-weight:normal;color:#2a2a2a;transform:scaleX(1.0000);">10</div>
<div class="t" style="left:417.07px;top:174px;font-size:10px;font-weight:normal;color:#2a2a2a;transform:scaleX(1.0000);">11</div>
<div class="t" style="left:453.44px;top:174px;font-size:10px;font-weight:normal;color:#2a2a2a;transform:scaleX(1.0000);">12</div>
<div class="t" style="left:490.31px;top:174px;font-size:10px;font-weight:normal;color:#2a2a2a;transform:scaleX(1.0000);">13</div>
<div class="t" style="left:527.18px;top:174px;font-size:10px;font-weight:normal;color:#2a2a2a;transform:scaleX(1.0000);">14</div>
<div class="t" style="left:564.05px;top:174px;font-size:10px;font-weight:normal;color:#2a2a2a;transform:scaleX(1.0000);">15</div>
<div class="t" style="left:600.92px;top:174px;font-size:10px;font-weight:normal;color:#2a2a2a;transform:scaleX(1.0000);">16</div>
<div class="t" style="left:637.79px;top:174px;font-size:10px;font-weight:normal;color:#2a2a2a;transform:scaleX(1.0000);">17</div>
<div class="t" style="left:5.00px;top:264px;font-size:10px;font-weight:normal;color:#2a2a2a;transform:scaleX(1.0000);">1</div>
<div class="t" style="left:5.50px;top:301px;font-size:10px;font-weight:normal;color:#2a2a2a;transform:scaleX(1.0000);">2</div>
<div class="t" style="left:5.00px;top:362px;font-size:10px;font-weight:normal;color:#2a2a2a;transform:scaleX(1.0000);">1</div>
<div class="t" style="left:226.88px;top:192px;font-size:17px;font-weight:normal;color:#000;transform:scaleX(1.1163);">Relação simplificada de usuários cadastrados</div>
<div class="t" style="left:56.80px;top:262px;font-size:12px;font-weight:bold;color:#111;transform:scaleX(1.2000);">Id.</div>
<div class="t" style="left:103.96px;top:262px;font-size:12px;font-weight:bold;color:#111;transform:scaleX(1.0375);">Data Cadastro</div>
<div class="t" style="left:227.08px;top:262px;font-size:12px;font-weight:bold;color:#111;transform:scaleX(1.1167);">LOGIN</div>
<div class="t" style="left:335.74px;top:262px;font-size:12px;font-weight:bold;color:#111;transform:scaleX(1.0571);">Nome Completo</div>
<div class="t" style="left:504.78px;top:262px;font-size:12px;font-weight:bold;color:#111;transform:scaleX(1.1233);">Email</div>
<div class="t" style="left:573.89px;top:262px;font-size:12px;font-weight:bold;color:#111;transform:scaleX(1.1111);">Id. Grup</div>
<div class="t" style="left:42.89px;top:277px;font-size:12px;font-weight:normal;color:#111;transform:scaleX(1.1053);">=Fields</div>
<div class="t" style="left:96.91px;top:277px;font-size:12px;font-weight:normal;color:#111;transform:scaleX(1.0909);">=Fields!DATACA</div>
<div class="t" style="left:204.92px;top:277px;font-size:12px;font-weight:normal;color:#111;transform:scaleX(1.0769);">=Fields!LOGIN</div>
<div class="t" style="left:301.54px;top:277px;font-size:12px;font-weight:normal;color:#111;transform:scaleX(1.0647);">=Fields!NOMECOMPLETO.V</div>
<div class="t" style="left:479.40px;top:277px;font-size:12px;font-weight:normal;color:#111;transform:scaleX(1.0974);">=Fields!EMAIL</div>
<div class="t" style="left:574.38px;top:277px;font-size:12px;font-weight:normal;color:#111;transform:scaleX(1.1250);">=Fields!I</div>
<div class="t" style="left:54.89px;top:333px;font-size:12px;font-weight:normal;color:#111;transform:scaleX(1.1110);">=Globals!PageNumber + ' of ' + Globals!TotalP</div>
<div class="t" style="left:20.03px;top:218px;font-size:11px;font-weight:bold;color:#0a0a0a;transform:scaleX(0.9697);">Page Header</div>
<div class="t" style="left:20.03px;top:314px;font-size:11px;font-weight:bold;color:#0a0a0a;transform:scaleX(0.9697);">Body</div>
<div class="t" style="left:20.03px;top:398px;font-size:11px;font-weight:bold;color:#0a0a0a;transform:scaleX(0.9697);">Page Footer</div>
<div class="t" style="left:6.05px;top:744px;font-size:11px;font-weight:normal;color:#0a0a0a;transform:scaleX(0.9535);">Designer</div>
<div class="t" style="left:59.33px;top:742px;font-size:11px;font-weight:normal;color:#0a0a0a;transform:scaleX(0.9659);">RDL Text</div>
<div class="t" style="left:115.88px;top:742px;font-size:11px;font-weight:normal;color:#0a0a0a;transform:scaleX(0.9237);">Preview</div>
<div class="t" style="left:671.71px;top:169px;font-size:11px;font-weight:normal;color:#0a0a0a;transform:scaleX(0.9857);">Properties</div>
<div class="t" style="left:674.30px;top:191px;font-size:11px;font-weight:normal;color:#0a0a0a;transform:scaleX(0.9268);">*Report*</div>
<div class="t" style="left:694.01px;top:236px;font-size:11px;font-weight:bold;color:#111;transform:scaleX(0.9889);">Body</div>
<div class="t" style="left:694.02px;top:252px;font-size:11px;font-weight:normal;color:#262626;transform:scaleX(0.9806);width:83.60px;height:16.5px;overflow:hidden;">BodyColumns</div>
<div class="t" style="left:780.97px;top:252px;font-size:11px;font-weight:bold;color:#111;transform:scaleX(1.0312);width:115.42px;height:16.5px;overflow:hidden;">1</div>
<div class="t" style="left:694.02px;top:268px;font-size:11px;font-weight:normal;color:#262626;transform:scaleX(0.9806);width:83.60px;height:16.5px;overflow:hidden;">BodyColumnSpac</div>
<div class="t" style="left:694.02px;top:283px;font-size:11px;font-weight:normal;color:#262626;transform:scaleX(0.9806);width:83.60px;height:16.5px;overflow:hidden;">BodyHeight</div>
<div class="t" style="left:782.00px;top:283px;font-size:11px;font-weight:bold;color:#111;transform:scaleX(1.0312);width:114.42px;height:16.5px;overflow:hidden;">63.4pt</div>
<div class="t" style="left:694.01px;top:299px;font-size:11px;font-weight:bold;color:#111;transform:scaleX(0.9889);">Report</div>
<div class="t" style="left:695.00px;top:314px;font-size:11px;font-weight:normal;color:#262626;transform:scaleX(0.9806);width:82.60px;height:16.5px;overflow:hidden;">Author</div>
<div class="t" style="left:694.02px;top:330px;font-size:11px;font-weight:normal;color:#262626;transform:scaleX(0.9806);width:83.60px;height:16.5px;overflow:hidden;">Code</div>
<div class="t" style="left:781.06px;top:330px;font-size:11px;font-weight:normal;color:#111;transform:scaleX(0.9375);width:126.87px;height:16.5px;overflow:hidden;">None defined</div>
<div class="t" style="left:694.02px;top:346px;font-size:11px;font-weight:normal;color:#262626;transform:scaleX(0.9806);width:83.60px;height:16.5px;overflow:hidden;">Description</div>
<div class="t" style="left:694.02px;top:361px;font-size:11px;font-weight:normal;color:#262626;transform:scaleX(0.9806);width:83.60px;height:16.5px;overflow:hidden;">ModulesClasses</div>
<div class="t" style="left:781.06px;top:361px;font-size:11px;font-weight:normal;color:#111;transform:scaleX(0.9375);width:126.87px;height:16.5px;overflow:hidden;">No Modules, No Classes defined</div>
<div class="t" style="left:694.02px;top:377px;font-size:11px;font-weight:normal;color:#262626;transform:scaleX(0.9806);width:83.60px;height:16.5px;overflow:hidden;">Page Margins</div>
<div class="t" style="left:781.06px;top:377px;font-size:11px;font-weight:normal;color:#111;transform:scaleX(0.9375);width:126.87px;height:16.5px;overflow:hidden;">(l=.25in, t=.25in, r=.25in, b=.25in)</div>
<div class="t" style="left:694.02px;top:392px;font-size:11px;font-weight:normal;color:#262626;transform:scaleX(0.9806);width:83.60px;height:16.5px;overflow:hidden;">PageFooter</div>
<div class="t" style="left:694.02px;top:408px;font-size:11px;font-weight:normal;color:#262626;transform:scaleX(0.9806);width:83.60px;height:16.5px;overflow:hidden;">PageHeader</div>
<div class="t" style="left:694.02px;top:424px;font-size:11px;font-weight:normal;color:#262626;transform:scaleX(0.9806);width:83.60px;height:16.5px;overflow:hidden;">PageHeight</div>
<div class="t" style="left:780.97px;top:424px;font-size:11px;font-weight:bold;color:#111;transform:scaleX(1.0312);width:115.42px;height:16.5px;overflow:hidden;">11in</div>
<div class="t" style="left:694.02px;top:439px;font-size:11px;font-weight:normal;color:#262626;transform:scaleX(0.9806);width:83.60px;height:16.5px;overflow:hidden;">PageWidth</div>
<div class="t" style="left:782.00px;top:439px;font-size:11px;font-weight:bold;color:#111;transform:scaleX(1.0312);width:114.42px;height:16.5px;overflow:hidden;">8.5in</div>
<div class="t" style="left:694.02px;top:455px;font-size:11px;font-weight:normal;color:#262626;transform:scaleX(0.9806);width:83.60px;height:16.5px;overflow:hidden;">Parameters</div>
<div class="t" style="left:781.06px;top:455px;font-size:11px;font-weight:normal;color:#111;transform:scaleX(0.9375);width:126.87px;height:16.5px;overflow:hidden;">ConnectionString, DATA, </div>
<div class="t" style="left:695.00px;top:470px;font-size:11px;font-weight:normal;color:#262626;transform:scaleX(0.9806);width:82.60px;height:16.5px;overflow:hidden;">Width</div>
<div class="t" style="left:782.00px;top:470px;font-size:11px;font-weight:bold;color:#111;transform:scaleX(1.0312);width:114.42px;height:16.5px;overflow:hidden;">7.5in</div>
<div class="t" style="left:695.00px;top:486px;font-size:11px;font-weight:bold;color:#111;transform:scaleX(0.9889);">XML</div>
<div class="t" style="left:694.02px;top:502px;font-size:11px;font-weight:normal;color:#262626;transform:scaleX(0.9806);width:83.60px;height:16.5px;overflow:hidden;">DataElementName</div>
<div class="t" style="left:694.02px;top:517px;font-size:11px;font-weight:normal;color:#262626;transform:scaleX(0.9806);width:83.60px;height:16.5px;overflow:hidden;">DataElementStyle</div>
<div class="t" style="left:782.00px;top:517px;font-size:11px;font-weight:bold;color:#111;transform:scaleX(1.0312);width:114.42px;height:16.5px;overflow:hidden;">AttributeNormal</div>
<div class="t" style="left:694.02px;top:533px;font-size:11px;font-weight:normal;color:#262626;transform:scaleX(0.9806);width:83.60px;height:16.5px;overflow:hidden;">DataSchema</div>
<div class="t" style="left:694.02px;top:548px;font-size:11px;font-weight:normal;color:#262626;transform:scaleX(0.9806);width:83.60px;height:16.5px;overflow:hidden;">DataTransform</div>
<div class="t" style="left:675.00px;top:707px;font-size:11px;font-weight:bold;color:#111;transform:scaleX(0.9861);">Author</div>
<div class="t" style="left:675.00px;top:721px;font-size:11px;font-weight:normal;color:#0a0a0a;transform:scaleX(0.9629);">The author of the report</div>
</body></html>
